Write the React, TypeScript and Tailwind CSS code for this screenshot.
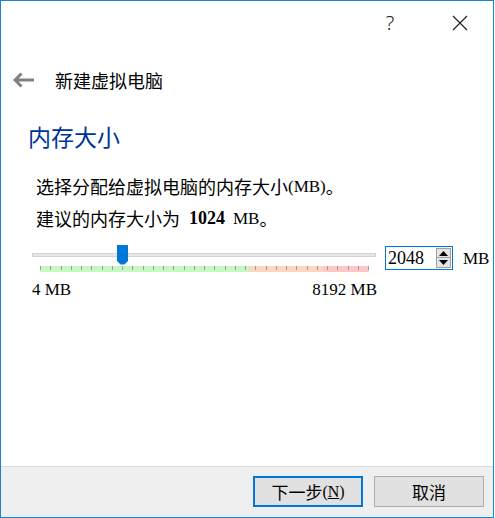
import React from "react";

const cjk = { fontFamily: '"Noto Sans CJK SC", "Noto Sans", sans-serif' };
const serif = { fontFamily: '"Liberation Serif", "Noto Sans CJK SC", serif' };

const TickBand = () => {
  const ticks = Array.from({ length: 33 }, (_, i) => Math.round(i * 10.25) + 0.5);
  return (
    <svg width="329" height="6" className="block">
      <rect x="0" y="0" width="209" height="6" fill="#c6f8c2" />
      <rect x="209" y="0" width="74" height="6" fill="#fdd6c2" />
      <rect x="283" y="0" width="46" height="6" fill="#ffc8c8" />
      {ticks.map((x) => (
        <line key={x} x1={x} y1="0" x2={x} y2="4" stroke="#a29a92" strokeWidth="1" />
      ))}
    </svg>
  );
};

const SpinBox = () => (
  <div className="flex h-[24px] w-[68px] items-center justify-between border border-[#0078d7] bg-white pl-[2px] pr-[1px]">
    <span className="text-[18px] leading-none text-black" style={serif}>
      2048
    </span>
    <div className="flex h-[20px] w-[15px] flex-col">
      <div className="flex h-[10px] items-center justify-center border border-[#a0a0a0] bg-[#e5e5e5]">
        <svg width="9" height="5">
          <polygon points="0,5 9,5 4.5,0" fill="#000" />
        </svg>
      </div>
      <div className="flex h-[10px] items-center justify-center border border-t-0 border-[#a0a0a0] bg-[#e5e5e5]">
        <svg width="9" height="5">
          <polygon points="0,0 9,0 4.5,5" fill="#000" />
        </svg>
      </div>
    </div>
  </div>
);

export default function App() {
  return (
    <div className="h-[518px] w-[495px] bg-white">
      <div className="flex h-[518px] w-[494px] flex-col border border-[#1883d7] bg-white text-black">
        {/* caption */}
        <div className="flex h-[44px] items-center justify-end pr-[10px]">
          <div className="mr-[24px] flex h-[44px] w-[46px] items-center justify-center text-[20px] font-light text-[#222]" style={{ fontFamily: '"Noto Sans", sans-serif' }}>
            ?
          </div>
          <div className="flex h-[44px] w-[46px] items-center justify-center">
            <svg width="16" height="16">
              <path d="M1 1 L15 15 M15 1 L1 15" stroke="#222" strokeWidth="1.2" />
            </svg>
          </div>
        </div>

        {/* header */}
        <div className="mt-[17px] flex h-[36px] items-center">
          <svg width="22" height="16" className="ml-[12px]">
            <path d="M2 8 H21 M8.5 1.5 L2 8 L8.5 14.5" stroke="#808080" strokeWidth="3" fill="none" />
          </svg>
          <span className="ml-[20px] text-[18px] leading-none" style={cjk}>
            新建虚拟电脑
          </span>
        </div>

        {/* heading */}
        <div className="ml-[27px] mt-[22px] h-[32px] text-[23px] leading-[32px] text-[#003399]" style={cjk}>
          内存大小
        </div>

        {/* description */}
        <div className="ml-[35px] mt-[18px] flex h-[32px] items-center text-[18px] leading-none" style={cjk}>
          <span>选择分配给虚拟电脑的内存大小</span>
          <span className="text-[17px] leading-none" style={serif}>(MB)</span>
          <span>。</span>
        </div>
        <div className="ml-[35px] flex h-[32px] items-center text-[18px] leading-none" style={cjk}>
          <span>建议的内存大小为</span>
          <span className="ml-[9px] text-[18px] font-bold leading-none" style={serif}>1024</span>
          <span className="ml-[8px] text-[17px] leading-none" style={serif}>MB</span>
          <span>。</span>
        </div>

        {/* slider + spin */}
        <div className="ml-[31px] mt-[11px] flex items-start">
          <div className="relative w-[344px]">
            <div className="mt-[8px] h-[4px] border border-[#d4d4d4] bg-[#e7e7e7]" />
            <div className="ml-[8px] mt-[9px]">
              <TickBand />
            </div>
            <svg width="11" height="20" className="absolute left-[85px] top-0">
              <polygon points="0,0 11,0 11,16 7.5,19.5 3.5,19.5 0,16" fill="#0078d7" />
            </svg>
          </div>
          <div className="ml-[9px] mt-[1px]">
            <SpinBox />
          </div>
          <span className="ml-[10px] mt-[5px] text-[17px] leading-none" style={serif}>
            MB
          </span>
        </div>

        {/* range labels */}
        <div className="ml-[31px] mt-[9px] flex w-[345px] justify-between text-[17px] leading-none" style={serif}>
          <span>4 MB</span>
          <span>8192 MB</span>
        </div>

        {/* footer */}
        <div className="mt-auto flex h-[51px] items-start justify-end gap-[11px] border-t border-[#dcdcdc] bg-[#efefef] pr-[9px] pt-[9px]">
          <button className="flex h-[31px] w-[110px] items-center justify-center border-2 border-[#0078d7] bg-[#e1e1e1] text-[17px] leading-none text-black" style={cjk}>
            <span>下一步</span>
            <span className="text-[16px] leading-none" style={serif}>
              (<span className="underline">N</span>)
            </span>
          </button>
          <button className="flex h-[31px] w-[110px] items-center justify-center border border-[#adadad] bg-[#e1e1e1] text-[17px] leading-none text-black" style={cjk}>
            取消
          </button>
        </div>
      </div>
    </div>
  );
}
